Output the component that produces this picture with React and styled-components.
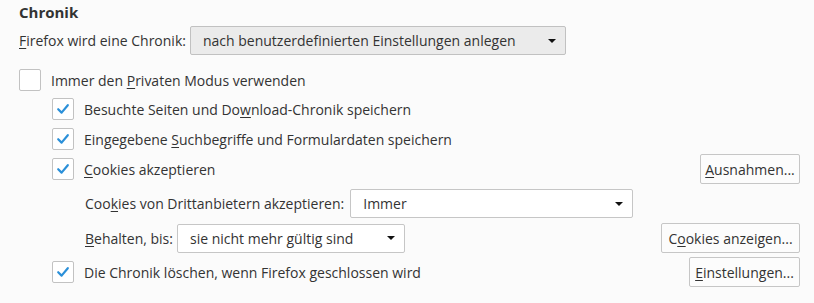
import styled, { createGlobalStyle } from 'styled-components';

const GlobalStyle = createGlobalStyle`
    html, body{
        margin: 0;
        padding: 0;
        background: #fbfbfb;
    }
    body{
        font-family: "Open Sans", "Noto Sans", sans-serif;
        font-size: 14px;
        color: #333333;
    }
`;

function Check({ checked }){
    return(
        <Box>
            {checked && (
                <svg width="22" height="22" viewBox="0 0 22 22">
                    <path d="M6.2 11.2 L9.6 14.6 L15.8 7.2" fill="none" stroke="#2b90d9" strokeWidth="2.2" strokeLinecap="round" strokeLinejoin="round"/>
                </svg>
            )}
        </Box>
    );
}

function Select({ value, width, tone }){
    return(
        <SelectBox $width={width} $tone={tone}>
            <span>{value}</span>
            <Arrow/>
        </SelectBox>
    );
}

export default function App(){
    return(
        <Page>
            <GlobalStyle/>
            <Heading>Chronik</Heading>
            <Row $top={4}>
                <Field>
                    <Label><u>F</u>irefox wird eine Chronik:</Label>
                    <Select value="nach benutzerdefinierten Einstellungen anlegen" width={376} tone="gray"/>
                </Field>
            </Row>
            <Row $top={14}>
                <Field>
                    <Check/>
                    <CheckLabel>Immer den <u>P</u>rivaten Modus verwenden</CheckLabel>
                </Field>
            </Row>
            <Row $top={7} $indent>
                <Field>
                    <Check checked/>
                    <CheckLabel>Besuchte Seiten und Do<u>w</u>nload-Chronik speichern</CheckLabel>
                </Field>
            </Row>
            <Row $top={8} $indent>
                <Field>
                    <Check checked/>
                    <CheckLabel>Eingegebene <u>S</u>uchbegriffe und Formulardaten speichern</CheckLabel>
                </Field>
            </Row>
            <Row $top={4} $indent>
                <Field>
                    <Check checked/>
                    <CheckLabel><u>C</u>ookies akzeptieren</CheckLabel>
                </Field>
                <Button $width={100}><u>A</u>usnahmen...</Button>
            </Row>
            <Row $top={5} $sub>
                <Field>
                    <Label $gap={6}>Coo<u>k</u>ies von Drittanbietern akzeptieren:</Label>
                    <Select value="Immer" width={283}/>
                </Field>
            </Row>
            <Row $top={5} $sub>
                <Field>
                    <Label><u>B</u>ehalten, bis:</Label>
                    <Select value="sie nicht mehr gültig sind" width={228}/>
                </Field>
                <Button $width={139}>C<u>o</u>okies anzeigen...</Button>
            </Row>
            <Row $top={4} $indent>
                <Field>
                    <Check checked/>
                    <CheckLabel>Die Chronik löschen, wenn Firefox <u>g</u>eschlossen wird</CheckLabel>
                </Field>
                <Button $width={111}><u>E</u>instellungen...</Button>
            </Row>
        </Page>
    );
}

const Page = styled.div`
    display: flex;
    flex-direction: column;
    width: 781px;
    padding: 2px 14px 0 19px;

    u{
        text-decoration: underline;
        text-underline-offset: 2px;
        text-decoration-thickness: 1px;
    }
`;

const Heading = styled.h2`
    margin: 0;
    font-size: 15px;
    font-weight: 700;
    line-height: 20px;
    color: #333333;
`;

const Row = styled.div`
    display: flex;
    align-items: center;
    justify-content: space-between;
    margin-top: ${props => props.$top}px;
    padding-left: ${props => props.$sub ? 66 : props.$indent ? 33 : 0}px;
`;

const Field = styled.div`
    display: flex;
    align-items: center;
`;

const Label = styled.span`
    margin-right: ${props => props.$gap || 4}px;
    white-space: nowrap;
`;

const CheckLabel = styled.span`
    margin-left: 10px;
    white-space: nowrap;
`;

const Box = styled.div`
    width: 20px;
    height: 20px;
    border: 1px solid #c2c2c2;
    border-radius: 2px;
    background: #ffffff;
    display: flex;
    align-items: center;
    justify-content: center;

    svg{
        flex: none;
    }
`;

const SelectBox = styled.div`
    box-sizing: border-box;
    width: ${props => props.$width}px;
    height: 29px;
    padding: 0 9px 0 12px;
    display: flex;
    align-items: center;
    justify-content: space-between;
    border: 1px solid ${props => props.$tone === 'gray' ? '#c1c1c1' : '#c6c6c6'};
    border-radius: 2px;
    background: ${props => props.$tone === 'gray' ? '#ebebeb' : '#ffffff'};
    white-space: nowrap;
`;

const Arrow = styled.div`
    width: 0;
    height: 0;
    border-left: 4px solid transparent;
    border-right: 4px solid transparent;
    border-top: 4px solid #111111;
`;

const Button = styled.div`
    box-sizing: border-box;
    width: ${props => props.$width}px;
    height: 30px;
    display: flex;
    align-items: center;
    justify-content: center;
    border: 1px solid #c6c6c6;
    border-radius: 2px;
    background: #fcfcfc;
    white-space: nowrap;
`;
